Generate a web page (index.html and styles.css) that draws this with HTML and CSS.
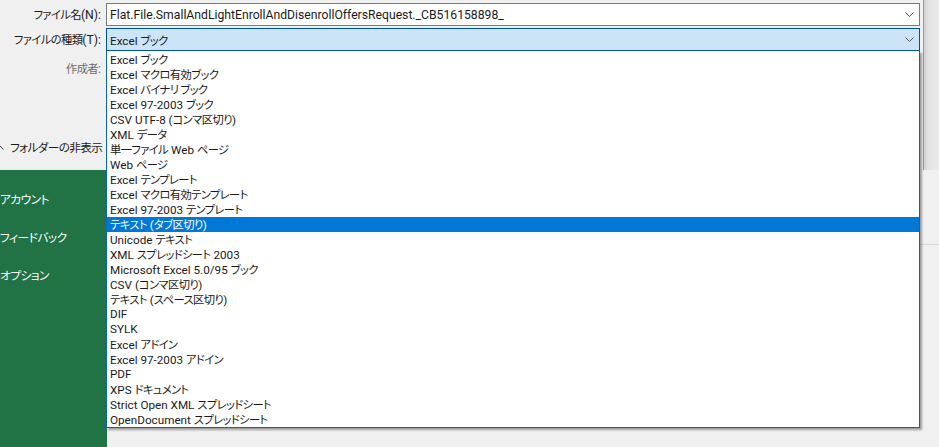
FILE: index.html
```html
<!DOCTYPE html>
<html lang="ja">
<head>
<meta charset="utf-8">
<link rel="stylesheet" href="styles.css">
</head>
<body>
<div class="screen">
  <div class="top">
    <div class="dialog">
      <div class="row">
        <span class="lbl"><span class="j">ファイル名</span>(N):</span>
        <div class="field input">
          <span class="val">Flat.File.SmallAndLightEnrollAndDisenrollOffersRequest._CB516158898_</span>
          <svg class="chev" width="9" height="5" viewBox="0 0 9 5"><path d="M0.5 0.5 L4.5 4.5 L8.5 0.5" fill="none" stroke="#555" stroke-width="1"/></svg>
        </div>
      </div>
      <div class="row">
        <span class="lbl"><span class="j">ファイルの種類</span>(T):</span>
        <div class="field combo">
          <span class="val">Excel <span class="j">ブック</span></span>
          <svg class="chev" width="9" height="5" viewBox="0 0 9 5"><path d="M0.5 0.5 L4.5 4.5 L8.5 0.5" fill="none" stroke="#555" stroke-width="1"/></svg>
        </div>
      </div>
      <div class="row meta">
        <span class="lbl dim"><span class="j">作成者</span>:</span>
      </div>
      <div class="folder">
        <svg class="caret" width="8" height="5" viewBox="0 0 8 5"><path d="M0.5 4.5 L4 1 L7.5 4.5" fill="none" stroke="#333" stroke-width="1"/></svg>
        <span class="j">フォルダーの非表示</span>
      </div>
    </div>
    <div class="shade"></div>
  </div>
  <div class="backstage">
    <nav class="nav">
      <div class="nav-item"><span class="j">アカウント</span></div>
      <div class="nav-item"><span class="j">フィードバック</span></div>
      <div class="nav-item"><span class="j">オプション</span></div>
    </nav>
    <div class="main">
      <div class="rule"></div>
    </div>
  </div>
  <ul class="list">
    <li>Excel <span class="j">ブック</span></li>
    <li>Excel <span class="j">マクロ有効ブック</span></li>
    <li>Excel <span class="j">バイナリ ブック</span></li>
    <li>Excel 97-2003 <span class="j">ブック</span></li>
    <li>CSV UTF-8 (<span class="j">コンマ区切り</span>)</li>
    <li>XML <span class="j">データ</span></li>
    <li><span class="j">単一ファイル</span> Web <span class="j">ページ</span></li>
    <li>Web <span class="j">ページ</span></li>
    <li>Excel <span class="j">テンプレート</span></li>
    <li>Excel <span class="j">マクロ有効テンプレート</span></li>
    <li>Excel 97-2003 <span class="j">テンプレート</span></li>
    <li class="sel"><span class="j">テキスト</span> (<span class="j">タブ区切り</span>)</li>
    <li>Unicode <span class="j">テキスト</span></li>
    <li>XML <span class="j">スプレッドシート</span> 2003</li>
    <li>Microsoft Excel 5.0/95 <span class="j">ブック</span></li>
    <li>CSV (<span class="j">コンマ区切り</span>)</li>
    <li><span class="j">テキスト</span> (<span class="j">スペース区切り</span>)</li>
    <li>DIF</li>
    <li>SYLK</li>
    <li>Excel <span class="j">アドイン</span></li>
    <li>Excel 97-2003 <span class="j">アドイン</span></li>
    <li>PDF</li>
    <li>XPS <span class="j">ドキュメント</span></li>
    <li>Strict Open XML <span class="j">スプレッドシート</span></li>
    <li>OpenDocument <span class="j">スプレッドシート</span></li>
  </ul>
</div>
</body>
</html>
```
FILE: styles.css
```css
html, body {
  margin: 0;
  padding: 0;
  background: #f0f0f0;
}
body {
  font-family: "Segoe UI", Roboto, "Noto Sans CJK JP", sans-serif;
  font-size: 12.2px;
  color: #1a1a1a;
  overflow: hidden;
}
.j {
  font-family: "Noto Sans CJK JP", sans-serif;
  font-size: 11.3px;
  letter-spacing: -0.6px;
  font-feature-settings: "palt";
}
.screen {
  position: relative;
  width: 939px;
  height: 447px;
  display: grid;
  grid-template-rows: 170px 1fr;
  overflow: hidden;
}
.top {
  display: flex;
}
.dialog {
  width: 924px;
  background: #f0f0f0;
  border-right: 1px solid #9a9a9a;
  display: flex;
  flex-direction: column;
  padding-top: 3px;
  padding-bottom: 13px;
  box-sizing: border-box;
}
.shade {
  flex: 1;
  background: linear-gradient(to right, #cfcfcf, #e2e2e2 4px, #ebebeb);
}
.row {
  display: flex;
  align-items: center;
  height: 23px;
}
.row + .row {
  margin-top: 2px;
}
.row.meta {
  margin-top: 7px;
  height: 21px;
}
.lbl {
  width: 101px;
  text-align: right;
  flex: none;
  margin-right: 5px;
  white-space: nowrap;
  line-height: 23px;
}
.lbl.dim {
  color: #6d6d6d;
}
.field {
  width: 814px;
  height: 23px;
  box-sizing: border-box;
  display: flex;
  align-items: center;
  padding: 0 5px 0 3px;
}
.field .val {
  flex: 1;
  white-space: nowrap;
}
.input {
  background: #fff;
  border: 1px solid #7a7a7a;
}
.combo {
  background: #cce4f7;
  border: 1px solid #005499;
  font-size: 11.7px;
}
.chev {
  flex: none;
}
.folder {
  margin-top: auto;
  height: 20px;
  display: flex;
  align-items: center;
  gap: 6px;
  margin-left: -4px;
}
.folder .j {
  font-size: 11.6px;
}
.caret {
  flex: none;
}
.backstage {
  display: flex;
}
.nav {
  width: 107px;
  background: #217346;
  color: #fff;
  padding-top: 10px;
  box-sizing: border-box;
}
.nav-item {
  height: 38px;
  line-height: 38px;
  white-space: nowrap;
}
.nav-item .j {
  font-size: 11.8px;
}
.main {
  flex: 1;
  background: #f0f0f0;
  padding-top: 74px;
}
.rule {
  height: 1px;
  background: #d7d7d7;
}
.list {
  position: absolute;
  left: 106px;
  top: 51px;
  width: 814px;
  box-sizing: border-box;
  margin: 0;
  padding: 1px 0 0 0;
  list-style: none;
  background: #fff;
  border: 1px solid #0067c0;
  border-top: none;
  box-shadow: 2px 2px 2px rgba(0, 0, 0, 0.35);
  font-size: 11.7px;
}
.list li {
  height: 15px;
  line-height: 15px;
  padding-left: 3px;
  white-space: nowrap;
}
.list li.sel {
  background: #0078d7;
  color: #fff;
}
```
